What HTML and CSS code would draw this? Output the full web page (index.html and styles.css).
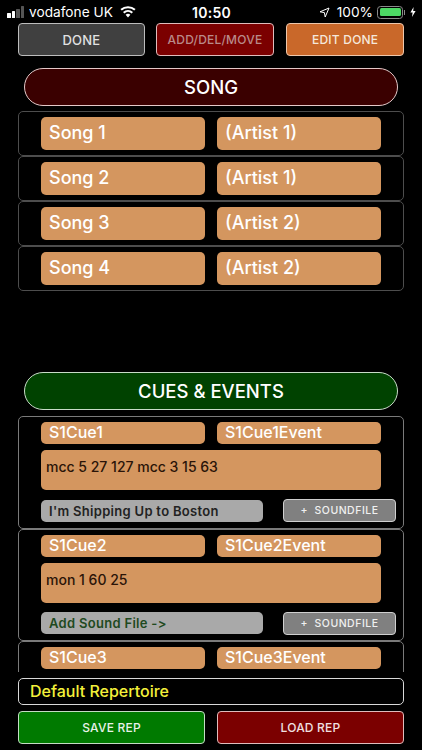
FILE: index.html
```html
<!DOCTYPE html>
<html lang="en">
<head>
<meta charset="utf-8">
<title>Repertoire</title>
<link rel="stylesheet" href="styles.css">
</head>
<body>
<div class="screen">
  <div class="status">
    <div class="status-left">
      <span class="bars"><i class="b1"></i><i class="b2"></i><i class="b3 dim"></i><i class="b4 dim"></i></span>
      <span>vodafone UK</span>
      <svg class="wifi" width="16" height="12" viewBox="0 0 16 12"><path d="M8 11.5 L5.6 8.7 A3.6 3.6 0 0 1 10.4 8.7 Z M4.4 7.4 L3 5.9 A7.4 7.4 0 0 1 13 5.9 L11.6 7.4 A5.4 5.4 0 0 0 4.4 7.4 Z M1.8 4.6 L0.4 3.1 A11.2 11.2 0 0 1 15.6 3.1 L14.2 4.6 A9.2 9.2 0 0 0 1.8 4.6 Z" fill="#fff"/></svg>
    </div>
    <div class="status-time">10:50</div>
    <div class="status-right">
      <svg class="arrow" width="11" height="11" viewBox="0 0 11 11"><path d="M10 1 L1 4.8 L5.4 5.6 L6.2 10 Z" fill="none" stroke="#fff" stroke-width="1"/></svg>
      <span>100%</span>
      <span class="battery"><span class="battery-fill"></span></span>
      <svg class="bolt" width="6" height="10" viewBox="0 0 6 10"><path d="M3.6 0 L0.4 5.6 H2.6 L2 10 L5.6 4 H3.2 Z" fill="#fff"/></svg>
    </div>
  </div>

  <div class="top-buttons">
    <div class="btn btn-done">DONE</div>
    <div class="btn btn-add">ADD/DEL/MOVE</div>
    <div class="btn btn-edit">EDIT DONE</div>
  </div>

  <div class="pill pill-song">SONG</div>

  <div class="song-list">
    <div class="song-row"><div class="field">Song 1</div><div class="field">(Artist 1)</div></div>
    <div class="song-row"><div class="field">Song 2</div><div class="field">(Artist 1)</div></div>
    <div class="song-row"><div class="field">Song 3</div><div class="field">(Artist 2)</div></div>
    <div class="song-row"><div class="field">Song 4</div><div class="field">(Artist 2)</div></div>
  </div>

  <div class="pill pill-cues">CUES &amp; EVENTS</div>

  <div class="cue-list">
    <div class="cue-row">
      <div class="cue-head"><div class="field small">S1Cue1</div><div class="field small">S1Cue1Event</div></div>
      <div class="cue-text">mcc 5 27 127 mcc 3 15 63</div>
      <div class="cue-foot"><div class="sound">I'm Shipping Up to Boston</div><div class="btn-sound">+&nbsp; SOUNDFILE</div></div>
    </div>
    <div class="cue-row">
      <div class="cue-head"><div class="field small">S1Cue2</div><div class="field small">S1Cue2Event</div></div>
      <div class="cue-text">mon 1 60 25</div>
      <div class="cue-foot"><div class="sound sound-empty">Add Sound File -&gt;</div><div class="btn-sound">+&nbsp; SOUNDFILE</div></div>
    </div>
    <div class="cue-row">
      <div class="cue-head"><div class="field small">S1Cue3</div><div class="field small">S1Cue3Event</div></div>
    </div>
  </div>

  <div class="rep-name">Default Repertoire</div>
  <div class="bottom-buttons">
    <div class="btn btn-save">SAVE REP</div>
    <div class="btn btn-load">LOAD REP</div>
  </div>
</div>
</body>
</html>
```
FILE: styles.css
```css
* { box-sizing: border-box; }
html, body { margin: 0; padding: 0; background: #000; }
body { font-family: Inter, "Liberation Sans", sans-serif; color: #fff; }
.screen { width: 422px; height: 750px; overflow: hidden; padding: 0 18px; display: flex; flex-direction: column; }

.status { height: 23px; margin: 0 -18px; padding: 1px 6px 0 7px; display: grid; grid-template-columns: 1fr auto 1fr; align-items: center; font-size: 13.7px; }
.status-left { display: flex; align-items: center; gap: 5px; }
.wifi { margin-left: 2px; }
.bars { display: flex; align-items: flex-end; gap: 1px; height: 12px; }
.bars i { display: block; width: 3.5px; background: #fff; border-radius: .5px; }
.bars .b1 { height: 5px; }
.bars .b2 { height: 7px; }
.bars .b3 { height: 9px; }
.bars .b4 { height: 12px; }
.bars .dim { background: #555; }
.status-time { font-weight: 600; font-size: 14px; letter-spacing: .3px; }
.status-right { display: flex; align-items: center; justify-content: flex-end; gap: 4px; }
.arrow { margin-right: 3px; }
.battery { width: 26px; height: 13px; border: 1px solid #8a8a8a; border-radius: 3.5px; padding: 1.5px; display: block; position: relative; margin-right: 3px; }
.battery::after { content: ""; position: absolute; top: 3px; right: -3px; width: 1.5px; height: 5px; background: #8a8a8a; }
.battery-fill { display: block; height: 100%; background: #4cd964; border-radius: 1.5px; }

.btn { display: flex; align-items: center; justify-content: center; border-radius: 4px; border: 1px solid #ccc; font-size: 12px; font-weight: 500; letter-spacing: .2px; }
.top-buttons { display: flex; height: 33px; gap: 11px; }
.btn-done { width: 127px; background: #404040; border-color: #bdbdbd; color: #e2e2e2; font-size: 13px; }
.btn-add { width: 119px; background: #7b0000; border-color: #e0bcbc; color: #b98a8a; margin-right: 1px; }
.btn-edit { width: 118px; background: #c9682a; border-color: #eec7ab; color: #f5e8dc; }

.pill { margin: 0 6px; height: 38px; border-radius: 19px; display: flex; align-items: center; justify-content: center; font-size: 18.5px; font-weight: 500; flex: none; }
.pill-song { margin-top: 12px; background: #3a0000; border: 1px solid #e3c8c8; }
.pill-cues { margin-top: 81px; background: #004200; border: 1px solid #c8dcc8; }

.song-list { margin-top: 5px; }
.song-row { height: 45px; border: 1px solid #4d4d4d; border-radius: 5px; padding: 5px 22px 0; display: flex; gap: 12px; }
.field { width: 164px; height: 33px; background: #d4965f; border-radius: 5px; padding: 0 8px 3px; display: flex; align-items: center; font-size: 18px; font-weight: 500; color: #fff; }
.field.small { height: 22px; font-size: 16px; padding-bottom: 2px; }

.cue-list { margin-top: 6px; height: 256px; overflow: hidden; flex: none; }
.cue-row { height: 112.5px; border: 1px solid #7a7a7a; border-radius: 5px; padding: 5px 22px 0; }
.cue-head { display: flex; gap: 12px; }
.cue-text { width: 340px; height: 40px; margin-top: 6px; padding: 8px 5px; background: #d4965f; border-radius: 5px; font-size: 14px; font-weight: 500; color: #2a1408; }
.cue-foot { display: flex; align-items: center; justify-content: space-between; width: 355px; margin-top: 9px; }
.sound { width: 222px; height: 22px; background: #a9a9a9; border-radius: 5px; padding: 0 8px; display: flex; align-items: center; font-size: 13px; font-weight: 600; letter-spacing: .3px; color: #222; }
.sound-empty { color: #1f4a1f; }
.btn-sound { width: 113px; height: 23px; border: 1px solid #cfcfcf; border-radius: 4px; background: #808080; display: flex; align-items: center; justify-content: center; font-size: 10.5px; font-weight: 500; letter-spacing: .5px; color: #f0f0f0; }

.rep-name { margin-top: 6px; height: 27px; border: 1px solid #d8d8d8; border-radius: 5px; padding: 0 11px 1px; display: flex; align-items: center; font-size: 16px; font-weight: 500; color: #f4f13a; flex: none; }
.bottom-buttons { display: flex; gap: 12px; height: 33px; margin-top: 6px; flex: none; }
.btn-save { flex: 1; background: #007a00; border-color: #c4dcc4; color: #e8f2e8; }
.btn-load { flex: 1; background: #7b0000; border-color: #e0bcbc; color: #f0e0e0; }
```
